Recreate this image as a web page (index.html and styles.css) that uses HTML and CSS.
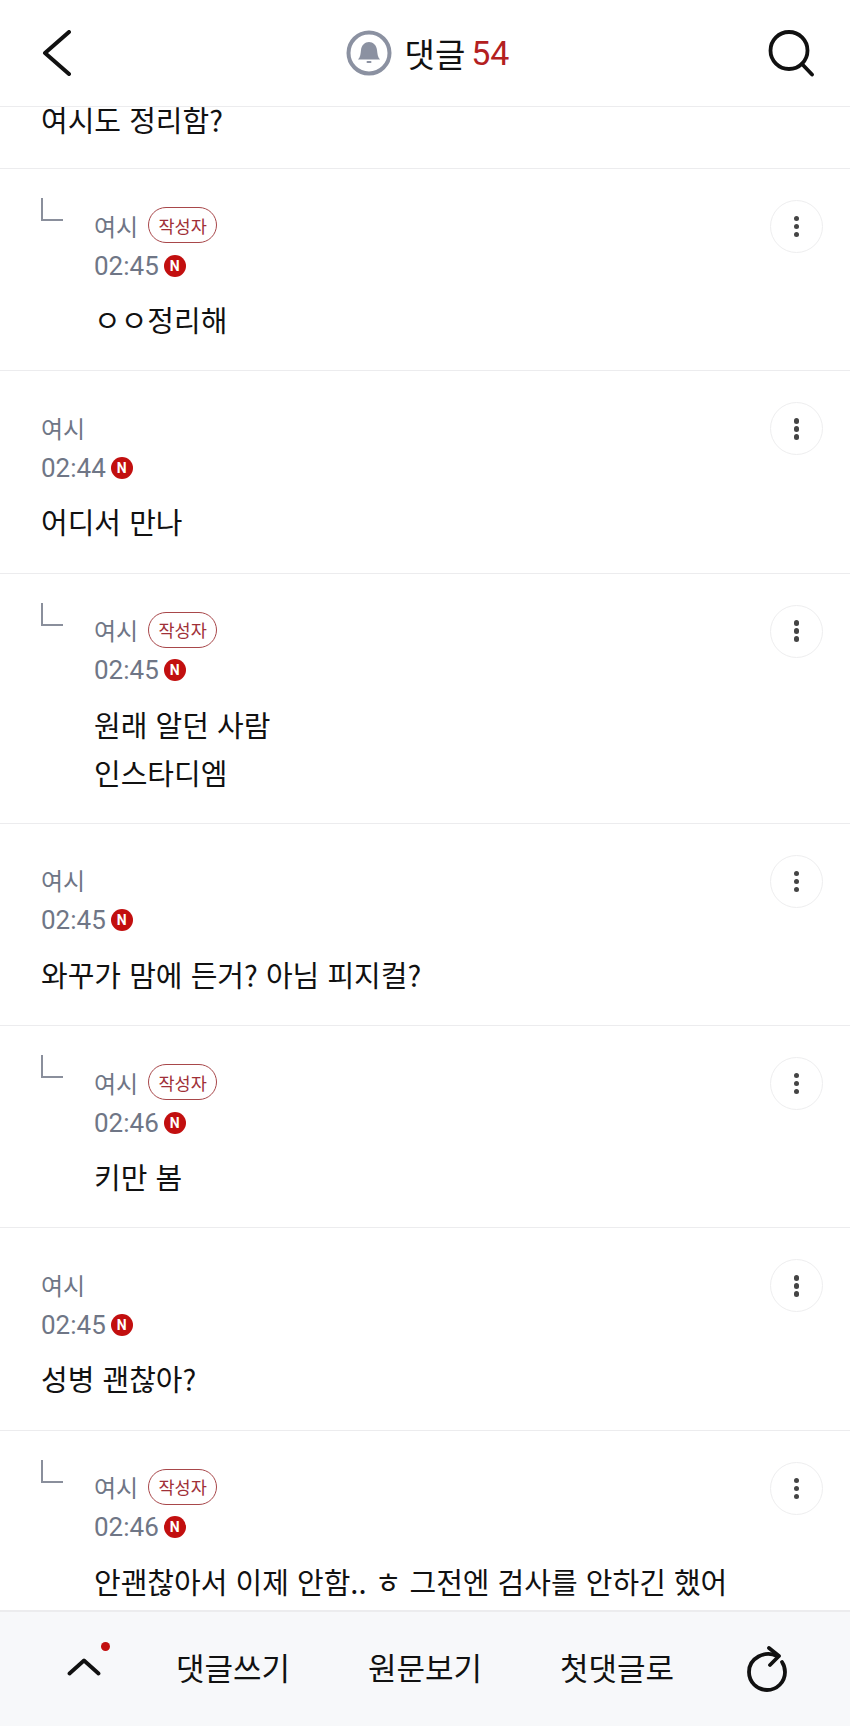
FILE: index.html
```html
<!DOCTYPE html>
<html lang="ko">
<head>
  <meta charset="utf-8">
  <title>댓글</title>
  <link rel="stylesheet" href="styles.css">
</head>
<body>
  <div class="page">
    <header class="top-bar">
      <svg class="back-icon" width="30" height="46" viewBox="0 0 30 46">
        <path d="M27 2 L3 23 L27 44" fill="none" stroke="#111" stroke-width="4" stroke-linecap="round" stroke-linejoin="round"/>
      </svg>
      <div class="top-title">
        <svg class="bell-icon" width="46" height="46" viewBox="0 0 46 46">
          <circle cx="23" cy="23" r="20.500" fill="#fff" stroke="#8b91a1" stroke-width="4"/>
          <path d="M12 29.500 C14.500 27 14.500 24 15 20 C15.500 15 19 12 23 12 C27 12 30.500 15 31 20 C31.500 24 31.500 27 34 29.500 Z" fill="#8b91a1"/>
          <rect x="20.500" y="31" width="5" height="2" rx="1" fill="#8b91a1"/>
        </svg>
        <span class="title-text">댓글</span>
        <span class="title-count">54</span>
      </div>
      <svg class="search-icon" width="48" height="48" viewBox="0 0 48 48">
        <circle cx="22" cy="21.500" r="18.500" fill="none" stroke="#111" stroke-width="3.8"/>
        <path d="M35 35 L45 45.500" fill="none" stroke="#111" stroke-width="3.800" stroke-linecap="round"/>
      </svg>
    </header>

    <main class="list">
      <div class="row row-cut">
        <div class="comment-text">여시도 정리함?</div>
      </div>

      <div class="row">
        <span class="reply-mark"></span>
        <div class="comment">
          <div class="name-line">여시 <span class="writer-tag">작성자</span></div>
          <div class="time-line">02:45 <span class="new-dot">N</span></div>
          <div class="comment-text">ㅇㅇ정리해</div>
        </div>
        <button class="more-btn"><i></i><i></i><i></i></button>
      </div>

      <div class="row">
        <div class="comment">
          <div class="name-line">여시</div>
          <div class="time-line">02:44 <span class="new-dot">N</span></div>
          <div class="comment-text">어디서 만나</div>
        </div>
        <button class="more-btn"><i></i><i></i><i></i></button>
      </div>

      <div class="row">
        <span class="reply-mark"></span>
        <div class="comment">
          <div class="name-line">여시 <span class="writer-tag">작성자</span></div>
          <div class="time-line">02:45 <span class="new-dot">N</span></div>
          <div class="comment-text">원래 알던 사람<br>인스타디엠</div>
        </div>
        <button class="more-btn"><i></i><i></i><i></i></button>
      </div>

      <div class="row">
        <div class="comment">
          <div class="name-line">여시</div>
          <div class="time-line">02:45 <span class="new-dot">N</span></div>
          <div class="comment-text">와꾸가 맘에 든거? 아님 피지컬?</div>
        </div>
        <button class="more-btn"><i></i><i></i><i></i></button>
      </div>

      <div class="row">
        <span class="reply-mark"></span>
        <div class="comment">
          <div class="name-line">여시 <span class="writer-tag">작성자</span></div>
          <div class="time-line">02:46 <span class="new-dot">N</span></div>
          <div class="comment-text">키만 봄</div>
        </div>
        <button class="more-btn"><i></i><i></i><i></i></button>
      </div>

      <div class="row">
        <div class="comment">
          <div class="name-line">여시</div>
          <div class="time-line">02:45 <span class="new-dot">N</span></div>
          <div class="comment-text">성병 괜찮아?</div>
        </div>
        <button class="more-btn"><i></i><i></i><i></i></button>
      </div>

      <div class="row">
        <span class="reply-mark"></span>
        <div class="comment">
          <div class="name-line">여시 <span class="writer-tag">작성자</span></div>
          <div class="time-line">02:46 <span class="new-dot">N</span></div>
          <div class="comment-text">안괜찮아서 이제 안함.. ㅎ 그전엔 검사를 안하긴 했어</div>
        </div>
        <button class="more-btn"><i></i><i></i><i></i></button>
      </div>
    </main>

    <footer class="bottom-bar">
      <div class="up-btn">
        <svg width="34" height="18" viewBox="0 0 34 18">
          <path d="M2.500 15.500 L17 2.500 L31.500 15.500" fill="none" stroke="#111" stroke-width="3.800" stroke-linecap="round" stroke-linejoin="round"/>
        </svg>
        <span class="red-dot"></span>
      </div>
      <span class="bar-link">댓글쓰기</span>
      <span class="bar-link">원문보기</span>
      <span class="bar-link">첫댓글로</span>
      <svg class="refresh-icon" width="42" height="46" viewBox="0 0 42 46">
        <path d="M31 10 C19 4 3 12 3 26 C3 36 11 44 21 44 C31 44 39 36 39 26 C39 22 38 19 36 16" fill="none" stroke="#111" stroke-width="3.800" stroke-linecap="round"/>
        <path d="M23 2 L33 10 L24 19" fill="none" stroke="#111" stroke-width="3.800" stroke-linecap="round" stroke-linejoin="round"/>
      </svg>
    </footer>
  </div>
</body>
</html>
```

FILE: styles.css
```css
* {
  box-sizing: border-box;
}

html, body {
  margin: 0;
  padding: 0;
}

body {
  background: #fff;
  color: #111;
  font-family: "Noto Sans CJK KR", "Noto Sans", sans-serif;
}

.page {
  display: flex;
  flex-direction: column;
  width: 850px;
  height: 1726px;
  overflow: hidden;
}

.top-bar {
  display: flex;
  align-items: center;
  justify-content: space-between;
  flex-shrink: 0;
  height: 107px;
  padding: 0 35px 0 42px;
  border-bottom: 1px solid #ececee;
}

.top-title {
  display: flex;
  align-items: center;
  margin-left: 16px;
}

.bell-icon {
  margin-right: 13px;
}

.title-text {
  font-size: 33px;
  line-height: 44px;
}

.title-count {
  margin-left: 6px;
  color: #b3201f;
  font-family: Roboto, sans-serif;
  font-size: 34px;
  line-height: 44px;
}

.list {
  flex: 1;
  min-height: 0;
}

.row {
  display: flex;
  align-items: flex-start;
  padding: 0 27px 0 41px;
  border-bottom: 1px solid #ececee;
}

.row-cut {
  height: 62px;
}

.row-cut .comment-text {
  margin-top: 0;
  line-height: 24px;
}

.reply-mark {
  flex-shrink: 0;
  width: 22px;
  height: 23px;
  margin: 29px 31px 0 0;
  border-left: 2px solid #8a8f9c;
  border-bottom: 2px solid #8a8f9c;
}

.comment {
  flex: 1;
  padding: 36px 0 27.300px;
}

.name-line {
  display: flex;
  align-items: center;
  gap: 10px;
  height: 40px;
  color: #6f7686;
  font-size: 24px;
}

.writer-tag {
  display: flex;
  align-items: center;
  justify-content: center;
  width: 69px;
  height: 36px;
  border: 1.5px solid #a8474a;
  border-radius: 18px;
  color: #a03038;
  font-size: 17.500px;
}

.time-line {
  display: flex;
  align-items: center;
  gap: 5px;
  height: 41px;
  color: #6f7686;
  font-family: Roboto, sans-serif;
  font-size: 26px;
}

.new-dot {
  display: flex;
  align-items: center;
  justify-content: center;
  width: 22px;
  height: 22px;
  border-radius: 50%;
  background: #c20f0f;
  color: #fff;
  font-size: 14px;
  font-weight: 700;
}

.comment-text {
  margin-top: 9px;
  font-size: 29px;
  line-height: 48px;
}

.more-btn {
  display: flex;
  flex-direction: column;
  align-items: center;
  justify-content: center;
  flex-shrink: 0;
  gap: 2.5px;
  width: 53px;
  height: 53px;
  margin-top: 31px;
  padding: 0;
  border: 1.5px solid #eeeeef;
  border-radius: 50%;
  background: #fff;
}

.more-btn i {
  display: block;
  width: 5.500px;
  height: 5.500px;
  border-radius: 50%;
  background: #444;
}

.bottom-bar {
  display: flex;
  align-items: center;
  flex-shrink: 0;
  height: 116px;
  padding: 0 60px 5px 67px;
  border-top: 2px solid #ececee;
  background: #f7f8fa;
}

.up-btn {
  position: relative;
  display: flex;
  width: 34px;
  margin-right: 75px;
}

.red-dot {
  position: absolute;
  top: -16px;
  left: 34px;
  width: 9px;
  height: 9px;
  border-radius: 50%;
  background: #c20f0f;
}

.bar-link {
  width: 113px;
  margin-right: 79px;
  color: #111;
  font-size: 31px;
  line-height: 44px;
  white-space: nowrap;
}

.bar-link:nth-of-type(3) {
  margin-right: 73px;
}

.refresh-icon {
  margin-top: 4px;
}
```
